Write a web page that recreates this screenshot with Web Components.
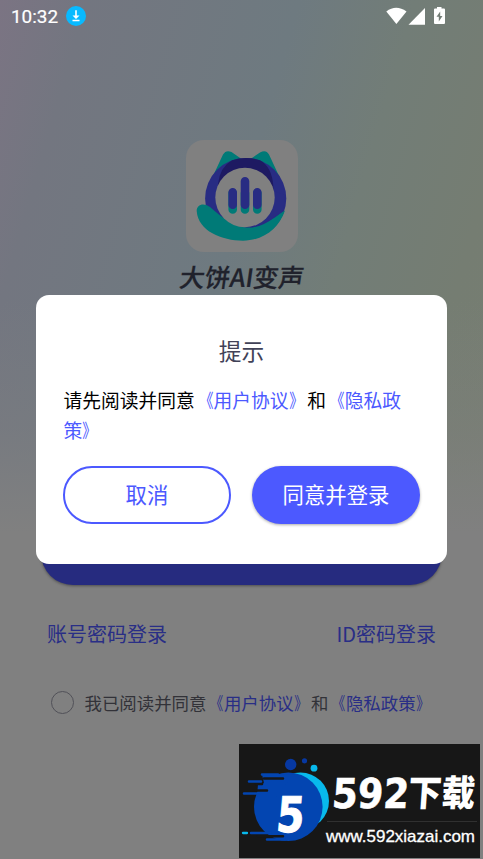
<!DOCTYPE html>
<html lang="zh-CN"><head><meta charset="utf-8"><title>大饼AI变声</title>
<style>html,body{margin:0;height:100%;overflow:hidden}body{font-family:"Noto Sans CJK SC",sans-serif}</style></head>
<body><login-screen></login-screen>
<script>
const define=(name,html)=>customElements.define(name,class extends HTMLElement{
  constructor(){super();const t=document.createElement('template');t.innerHTML=html;this.attachShadow({mode:'open'}).append(t.content.cloneNode(true));}
});

define('status-bar',`<style>
:host{display:flex;height:34px;box-sizing:border-box;padding:0 37px 0 11px;align-items:center;color:#fff;font:400 18.900px/34px Roboto,sans-serif}
.time{width:48px;white-space:nowrap;-webkit-text-stroke:.2px #fff}svg{display:block}.dl{margin-left:7px}.right{margin-left:auto}
</style><span class="time">10:32</span>
<svg class="dl" width="20" height="20" viewBox="0 0 20 20" style="margin-top:-2px"><circle cx="10" cy="10" r="10" fill="#08baff"/><path d="M9.2 4.2h1.6v5.3h2.7L10 13 6.5 9.500h2.700zM6.500 13.700h7v1.500h-7z" fill="#fff"/></svg>
<svg class="right" width="60" height="20" viewBox="0 0 60 20" fill="#fff" style="margin-top:-2px"><path d="M.3 5.600Q10-1.900 20.500 5.600L10.400 18z"/><path d="M22.500 18.700L39 2v16.700z"/><path fill-rule="evenodd" d="M51 1h4.500v1.500H58q1 0 1 1V17q0 1-1 1h-9q-1 0-1-1V3.500q0-1 1-1h2zM54.200 5.500l-3.700 5.300h2.300v4.700l3.700-5.600h-2.300z"/></svg>`);

define('app-logo',`<style>:host{display:block;width:112px;height:112px;border-radius:18px;background:#808080}svg{display:block}</style>
<svg width="112" height="112" viewBox="0 0 112 112">
<path fill="#007a77" d="M26.500 37L37 14.500Q40 9.500 45.500 12L57 20H63L74 12.500Q80 9 83 14.500L93.500 37 80 43H40z"/>
<circle cx="59.700" cy="58.500" r="40.600" fill="#282c83"/>
<path fill="#1e1a62" d="M32 60V44Q34 27 46 20.300Q60 15.500 74 20.300Q86 27 87.300 46V60z"/>
<path fill="#007a77" d="M10.700 71C10.500 65 17 62 24 67C35 76 47 88 64 87.500C80 87 90 75 99 70.500C93 88 78 100.500 57 100.700C36 100.700 12 91 10.700 71z"/>
<path fill="#282c83" d="M64 87.500Q79 86 97.500 71L99 55 85 50 80 75z"/>
<circle cx="59" cy="57.500" r="29.700" fill="#808080"/>
<g stroke-width="8.600" stroke-linecap="round"><path stroke="#007a77" d="M46.700 53v16.500M59 53v16.500M71.300 53v16.500"/><path stroke="#282c83" d="M46.700 52.300v12.400M59 41.300v23.400M71.300 52.300v12.400"/></g>
</svg>`);

define('app-brand',`<style>:host{display:flex;flex-direction:column;align-items:center;height:154px}
.name{margin:7px 0 0 2px;font:500 25.200px/34px "Noto Sans CJK SC",sans-serif;color:#20222c;-webkit-text-stroke:.2px #20222c;transform:skewX(-8deg);white-space:nowrap}</style>
<app-logo></app-logo><div class="name"><slot></slot></div>`);

define('pill-button',`<style>:host{display:flex;box-sizing:border-box;height:57.500px;border-radius:29px;padding-bottom:1.500px;align-items:center;justify-content:center;font-size:21.400px;line-height:30px;color:#fff;background:#4c59ff;box-shadow:0 1px 3px #0005}
:host([outline]){color:#4c59ff;background:#fff;border:2px solid #4c59ff;box-shadow:none}
:host([dimmed]){height:64px;border-radius:32px;background:#262b7f;box-shadow:0 1px 3px #0006}</style><slot></slot>`);

define('policy-link',`<style>:host{display:inline;color:var(--link,#4c59ff)}
.open,.close{display:inline-block;transform:scaleX(.76)}.open{transform-origin:96% 50%}.close{transform-origin:4% 50%}
:host([part-start]) .close,:host([part-end]) .open{display:none}</style><span class="open">《</span><slot></slot><span class="close">》</span>`);

define('agree-row',`<style>:host{display:flex;align-items:center;font-size:17.430px;line-height:26px;color:#323238;white-space:nowrap}
i{box-sizing:border-box;width:23px;height:23px;border:1.500px solid #515158;border-radius:50%;margin-right:10.500px}</style><i></i><span><slot></slot></span>`);

define('tip-dialog',`<style>:host{display:block;box-sizing:border-box;width:411px;height:269px;border-radius:13px;background:#fff;padding:39px 27px 0}
h2{margin:0;text-align:center;font-weight:400;font-size:22.700px;line-height:34px;color:#414257}
.body{margin-top:17px;height:60px;font-size:18.750px;line-height:30px;color:#000;padding-left:.5px;width:345px}
.actions{display:grid;grid-template-columns:1fr 1fr;gap:21px;margin-top:21px}</style>
<h2><slot name="title"></slot></h2><div class="body"><slot></slot></div><div class="actions"><slot name="actions"></slot></div>`);

define('site-badge',`<style>:host{display:grid;grid-template-columns:94px 1fr;width:241px;height:114px;background:#171717;color:#fff}
svg{display:block;overflow:visible}.words{padding-top:24px}
svg text{font-family:"Noto Sans CJK SC",sans-serif;font-weight:900}svg .num{font-family:"DejaVu Sans",sans-serif;font-weight:700}</style>
<svg width="94" height="114" viewBox="0 0 94 114">
<circle cx="61.500" cy="57" r="28.500" fill="#08b9ec"/>
<circle cx="49.300" cy="62.800" r="34.300" fill="#0345b1"/>
<path d="M23 30.500H56L48 39H25zM19 40h28l-10 13H18z" fill="#0345b1"/>
<g fill="none" stroke-linecap="round"><path stroke="#171717" stroke-width="2.500" d="M25 34.500h19M17 40h6M14 46.500h14M19 92.300h25"/><path stroke="#0345b1" stroke-width="2.500" d="M23 30.500h16M10 37.500h12M5 49.500h16M12 89h20M28 95.500h18"/><path stroke="#08b9ec" stroke-width="2.300" d="M4 89h4"/></g>
<circle cx="51.700" cy="20.500" r="5.700" fill="#0738a2"/><circle cx="65.500" cy="16.800" r="2.600" fill="#0738a2"/><circle cx="75" cy="24.200" r="3.400" fill="#08b9ec"/>
<text class="num" x="37" y="88" fill="#fff" stroke="#fff" font-size="49" textLength="28" lengthAdjust="spacingAndGlyphs" transform="translate(7 0) skewX(-5)">5</text>
</svg>
<div class="words"><svg width="147" height="90" viewBox="0 0 147 90" fill="#fff"><g transform="skewX(-4)"><text class="num" x="1" y="40.500" font-size="41" textLength="77" lengthAdjust="spacingAndGlyphs" stroke="#fff" stroke-width=".6">592</text><text x="77" y="38" font-size="36" textLength="67" lengthAdjust="spacingAndGlyphs">下载</text></g><path d="M-6 53.500H144" stroke="#303030"/><text x="-7" y="74" textLength="149" lengthAdjust="spacingAndGlyphs" style="font:400 17px 'Liberation Sans',sans-serif;stroke:#fff;stroke-width:.3">www.592xiazai.com</text></svg></div>`);

define('login-screen',`<style>
:host{display:flex;flex-direction:column;position:relative;width:483px;height:859px;overflow:hidden;--link:#4c59ff;
background:linear-gradient(180deg,#80808000 0 35%,#80808060 50%,#808080 62%),linear-gradient(106deg,#7b7483 0,#737680 12%,#6e7a80 41%,#727d77 57%,#757d72 74%,#787e70 100%)}
app-brand{margin-top:106px}
.main{margin:226.500px 41px 0}
.links{display:flex;justify-content:space-between;margin:34px 47px 0;font-size:20px;line-height:30px;color:#292e86}
agree-row{margin:41px 0 0 51px;--link:#292e86}
tip-dialog{position:absolute;left:36px;top:295px}
site-badge{position:absolute;left:239px;top:744px}
</style>
<status-bar></status-bar><app-brand>大饼AI变声</app-brand>
<pill-button class="main" dimmed></pill-button>
<div class="links"><span>账号密码登录</span><span>ID密码登录</span></div>
<agree-row>我已阅读并同意<policy-link>用户协议</policy-link>和<policy-link>隐私政策</policy-link></agree-row>
<tip-dialog><span slot="title">提示</span>请先阅读并同意<policy-link>用户协议</policy-link>和<policy-link part-start>隐私政</policy-link><br><policy-link part-end>策</policy-link>
<pill-button slot="actions" outline>取消</pill-button><pill-button slot="actions">同意并登录</pill-button></tip-dialog>
<site-badge></site-badge>`);
</script></body></html>
